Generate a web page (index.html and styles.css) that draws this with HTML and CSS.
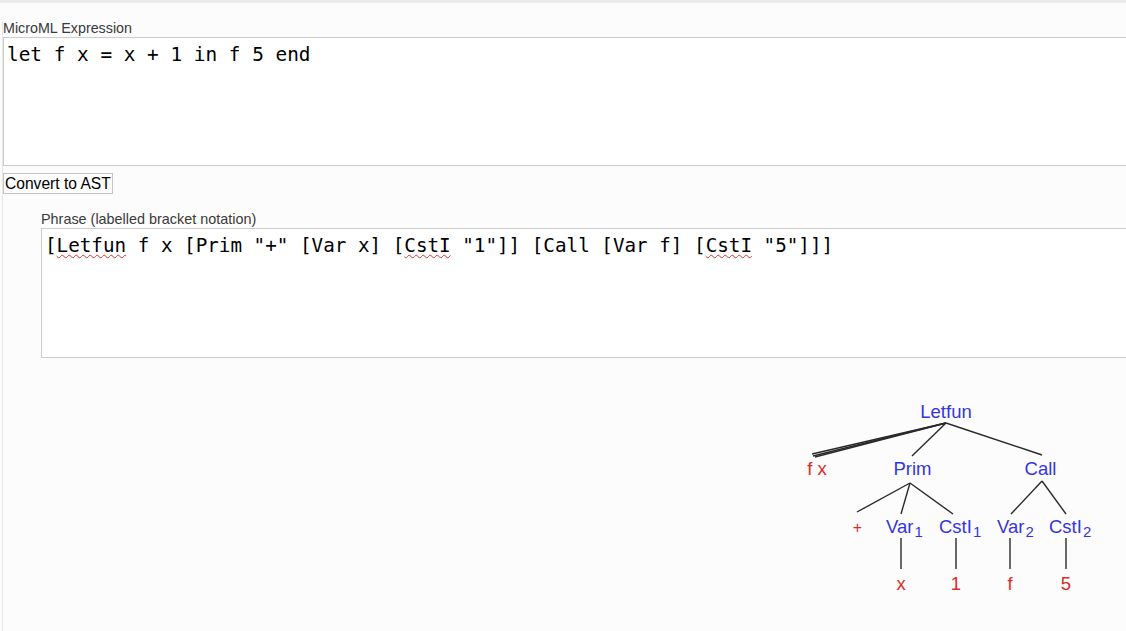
FILE: index.html
```html
<!DOCTYPE html>
<html>
<head>
<meta charset="utf-8">
<link rel="stylesheet" href="styles.css">
</head>
<body>
<div class="topbar"></div>
<div class="main">
  <label class="label">MicroML Expression</label>
  <div class="editor editor-expr">let f x = x + 1 in f 5 end</div>
  <button class="btn">Convert to AST</button>
  <div class="phrase">
    <label class="label">Phrase (labelled bracket notation)</label>
    <div class="editor editor-phrase">[<span class="typo">Letfun</span> f x [Prim "+" [Var x] [<span class="typo">CstI</span> "1"]] [Call [Var f] [<span class="typo">CstI</span> "5"]]]</div>
    <svg class="tree" width="346" height="220" viewBox="0 0 346 220">
      <g class="edges">
        <line x1="166" y1="32" x2="32" y2="63"/>
        <line x1="166" y1="32" x2="33" y2="65"/>
        <line x1="166" y1="32" x2="35" y2="66"/>
        <line x1="166" y1="32" x2="132" y2="65"/>
        <line x1="166" y1="32" x2="262" y2="64"/>
        <line x1="130" y1="92" x2="77" y2="121"/>
        <line x1="130" y1="92" x2="121" y2="123"/>
        <line x1="130" y1="92" x2="173" y2="123"/>
        <line x1="262" y1="90" x2="231" y2="123"/>
        <line x1="262" y1="90" x2="286" y2="123"/>
        <line x1="121" y1="147" x2="121" y2="178"/>
        <line x1="176" y1="147" x2="176" y2="178"/>
        <line x1="230" y1="147" x2="230" y2="178"/>
        <line x1="286" y1="147" x2="286" y2="178"/>
      </g>
      <text class="nt" x="166" y="27" text-anchor="middle">Letfun</text>
      <text class="t" x="37" y="84" text-anchor="middle">f x</text>
      <text class="nt" x="132.5" y="84" text-anchor="middle">Prim</text>
      <text class="nt" x="260.5" y="84" text-anchor="middle">Call</text>
      <text class="t plus" x="77.5" y="142" text-anchor="middle">+</text>
      <text class="nt" x="106" y="142">Var<tspan class="sub" dx="1" dy="4">1</tspan></text>
      <text class="nt" x="159" y="142">CstI<tspan class="sub" dx="1" dy="4">1</tspan></text>
      <text class="nt" x="217" y="142">Var<tspan class="sub" dx="1" dy="4">2</tspan></text>
      <text class="nt" x="269" y="142">CstI<tspan class="sub" dx="1" dy="4">2</tspan></text>
      <text class="t" x="121" y="199" text-anchor="middle">x</text>
      <text class="t" x="176" y="199" text-anchor="middle">1</text>
      <text class="t" x="230" y="199" text-anchor="middle">f</text>
      <text class="t" x="286" y="199" text-anchor="middle">5</text>
    </svg>
  </div>
</div>
</body>
</html>
```
FILE: styles.css
```css
html, body {
  margin: 0;
  padding: 0;
  overflow: hidden;
  background: #fcfcfc;
  height: 100%;
}
.topbar {
  height: 3px;
  background: #ebebeb;
}
.main {
  margin-left: 2px;
  border-left: 1px solid #e6e6e6;
  min-height: 628px;
  box-sizing: border-box;
}
.label {
  display: block;
  font-family: "Liberation Sans", Arial, sans-serif;
  font-size: 14.3px;
  line-height: 15px;
  color: #3a3a3a;
  margin-top: 18px;
  margin-bottom: 1px;
  white-space: nowrap;
}
.editor {
  box-sizing: border-box;
  width: 1160px;
  background: #ffffff;
  border: 1px solid #cccccc;
  font-family: "DejaVu Sans Mono", monospace;
  font-size: 19.4px;
  line-height: 23px;
  color: #000;
  padding: 5px 3px;
  white-space: pre;
}
.editor-expr {
  height: 129px;
}
.editor-phrase {
  height: 130px;
  font-size: 19.25px;
  padding: 5px 3px;
}
.typo {
  text-decoration: underline wavy #e03030;
  text-decoration-thickness: 1px;
  text-underline-offset: 2px;
}
.btn {
  display: block;
  margin-top: 7px;
  height: 21px;
  padding: 0 1px;
  box-sizing: border-box;
  background: #fdfdfd;
  border: 1px solid #c4c4c4;
  border-radius: 0;
  font-family: "Liberation Sans", Arial, sans-serif;
  font-size: 15.6px;
  line-height: 18px;
  color: #000;
}
.phrase {
  padding-left: 38px;
}
.phrase .label {
  font-size: 14.4px;
}
.tree {
  display: block;
  margin-top: 33px;
  margin-left: 739px;
  overflow: visible;
}
.edges line {
  stroke: #2a2a2a;
  stroke-width: 1.4;
}
.tree text {
  font-family: "Liberation Sans", Arial, sans-serif;
  font-size: 18.5px;
}
.tree .nt {
  fill: #3535e0;
}
.tree .t {
  fill: #e02828;
}
.tree .plus {
  font-size: 16px;
}
.tree .sub {
  font-size: 15px;
}
```
